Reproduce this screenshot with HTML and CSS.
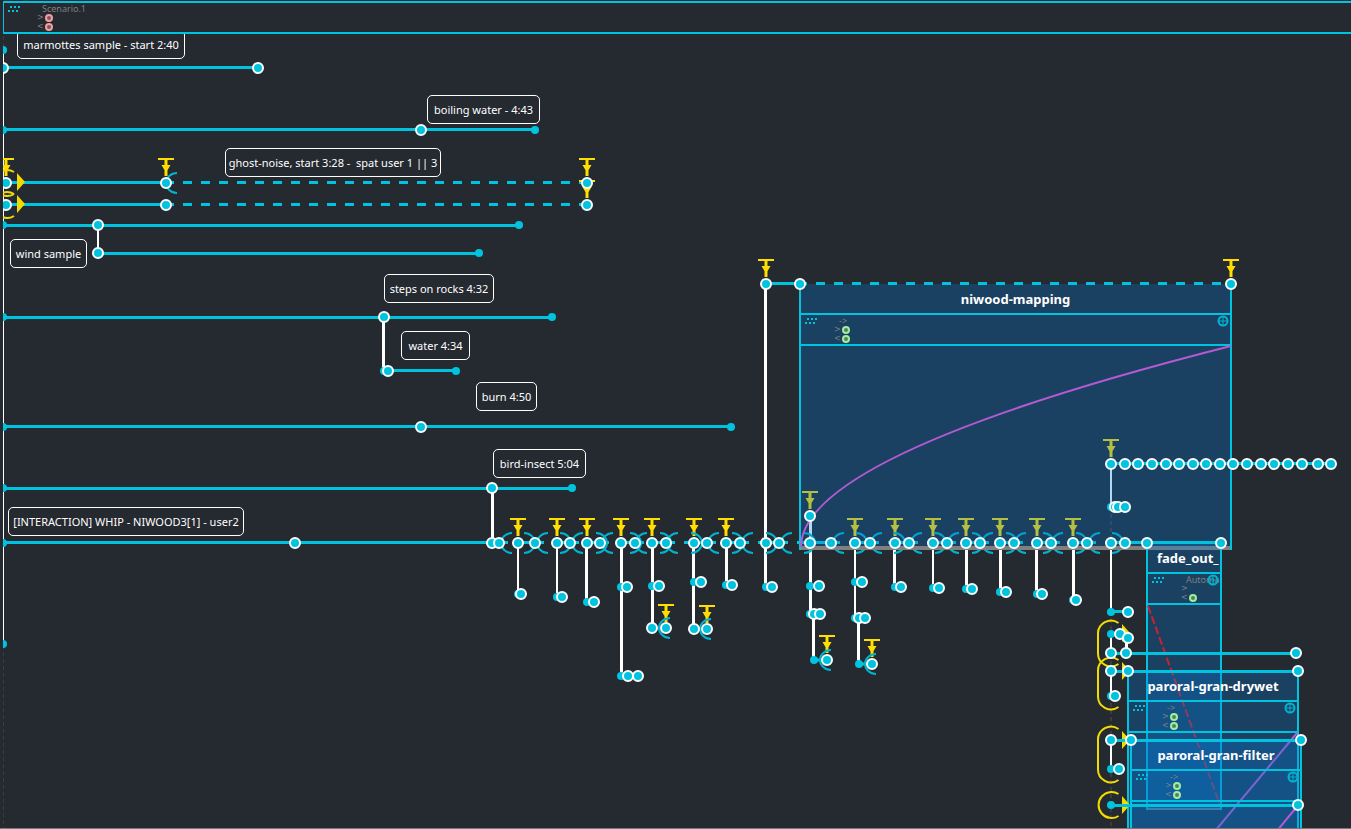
FILE: index.html
```html
<!DOCTYPE html>
<html lang="en">
<head>
<meta charset="utf-8">
<title>Scenario.1</title>
<link rel="stylesheet" href="styles.css">
</head>
<body>
<svg class="defs" aria-hidden="true">
  <defs>
    <circle id="n" r="5" class="node"/>
    <circle id="d" r="4" class="dot"/>
    <g id="t" class="trigger"><path d="M-8 -25H8V-23H-8ZM-1.500 -23H1.500V-7H-1.500ZM-4.500 -18H4.500L1 -12H-1Z"/></g>
    <path id="l" class="arc" d="M0 -10A11 10 0 0 0 0 10"/>
    <path id="r" class="arc" d="M0 -10A11 10 0 0 1 0 10"/>
    <path id="play" class="play" d="M0 -9L8 0L0 9Z"/>
    <g id="grip" class="grip"><path d="M2 0h2v2h-2zM6 0h2v2h-2zM10 0h2v2h-2zM0 4h2v2h-2zM4 4h2v2h-2zM8 4h2v2h-2z"/></g>
    <g id="plus" class="plus"><circle cx="6" cy="6" r="4.500"/><path d="M6 2V10M2 6H10"/></g>
  </defs>
</svg>

<header class="process-bar scenario">
  <svg class="grip-icon"><use href="#grip"/></svg>
  <div class="ports">
    <span class="name">Scenario.1</span>
    <span>&gt;</span><i class="ring in"></i>
    <span>&lt;</span><i class="ring in"></i>
  </div>
</header>

<main class="canvas">
  <svg class="layer" aria-hidden="true">
    <g transform="translate(-3 -34)">
      <path class="guide" d="M3 36V829M1111 507V829"/>
      <path class="edge" d="M3.500 50V644"/>
      <path class="line" d="M4 67.500H258M4 129.500H535M4 182.500H166M4 204.500H166M4 225.500H519M98 253.500H479M4 317.500H552M388 370.500H456M4 426.500H731M4 488.500H572M4 542.500H499"/>
      <path class="line dashed" d="M165 182.500H587M165 204.500H587"/>
      <path class="line" d="M518 542.500H535M557 542.500H570M587 542.500H600M621 542.500H635M652 542.500H666M694 542.500H707M726 542.500H740M766 542.500H779M810 542.500H831M855 542.500H870M895 542.500H909M933 542.500H947M966 542.500H980M1000 542.500H1014M1037 542.500H1051M1073 542.500H1087M814 660H827M859 664H872"/>
      <path class="line dashed" d="M499 542.500H518M535 542.500H557M570 542.500H587M600 542.500H621M635 542.500H652M666 542.500H694M707 542.500H726M740 542.500H766M779 542.500H810M831 542.500H855M870 542.500H895M909 542.500H933M947 542.500H966M980 542.500H1000M1014 542.500H1037M1051 542.500H1073M1087 542.500H1111"/>
      <path class="link" d="M383.500 317V371M492.500 488V543M586.500 543V602M621.500 543V676M652.500 543V628M693.500 543V629M726.500 543V585M765.500 284V587M810.500 516V614M813.500 614V660M858.500 618V664M894.500 543V587M966.500 543V589M1000.500 543V592M1036.500 543V594M1073.500 543V600"/>
      <path class="link thin" d="M98 225V253M518 543V594M557 543V597M855 543V618M933 543V588M1111 464V507M1111 543V612"/>

      <use href="#t" x="6" y="183"/><use href="#t" x="166" y="183"/><use href="#t" x="587" y="183"/><use href="#t" x="587" y="205"/>
      <use href="#t" x="518" y="543"/><use href="#t" x="557" y="543"/><use href="#t" x="587" y="543"/><use href="#t" x="621" y="543"/><use href="#t" x="652" y="543"/><use href="#t" x="694" y="543"/><use href="#t" x="726" y="543"/>
      <use href="#t" x="666" y="629"/><use href="#t" x="707" y="630"/><use href="#t" x="766" y="284"/><use href="#t" x="810" y="516"/>
      <use href="#t" x="855" y="543"/><use href="#t" x="895" y="543"/><use href="#t" x="933" y="543"/><use href="#t" x="966" y="543"/><use href="#t" x="1000" y="543"/><use href="#t" x="1037" y="543"/><use href="#t" x="1073" y="543"/>
      <use href="#t" x="827" y="660"/><use href="#t" x="872" y="664"/><use href="#t" x="1111" y="464"/>

      <use href="#l" x="177" y="183"/><use href="#l" x="512" y="543"/><use href="#l" x="548" y="543"/><use href="#l" x="583" y="543"/><use href="#l" x="613" y="543"/><use href="#l" x="647" y="543"/><use href="#l" x="678" y="543"/><use href="#l" x="719" y="543"/><use href="#l" x="753" y="543"/><use href="#l" x="792" y="543"/><use href="#l" x="844" y="543"/><use href="#l" x="882" y="543"/><use href="#l" x="922" y="543"/><use href="#l" x="959" y="543"/><use href="#l" x="993" y="543"/><use href="#l" x="1026" y="543"/><use href="#l" x="1063" y="543"/><use href="#l" x="1100" y="543"/>
      <use href="#l" x="670" y="628"/><use href="#l" x="711" y="629"/><use href="#l" x="831" y="660"/><use href="#l" x="876" y="664"/>
      <use href="#r" x="524" y="543"/><use href="#r" x="560" y="543"/><use href="#r" x="596" y="543"/><use href="#r" x="630" y="543"/><use href="#r" x="660" y="543"/><use href="#r" x="691" y="543"/><use href="#r" x="732" y="543"/><use href="#r" x="766" y="543"/><use href="#r" x="804" y="543"/><use href="#r" x="856" y="543"/><use href="#r" x="894" y="543"/><use href="#r" x="935" y="543"/><use href="#r" x="972" y="543"/><use href="#r" x="1006" y="543"/><use href="#r" x="1043" y="543"/><use href="#r" x="1076" y="543"/><use href="#r" x="1112" y="543"/>

      <path class="loop" d="M14 172A13 13 0 1 0 14 194M14 194A13 13 0 1 0 14 216"/>
      <use href="#play" x="17" y="182"/><use href="#play" x="17" y="204"/>
    </g>
  </svg>

  <section class="box niwood">
    <h2 class="title">niwood-mapping</h2>
    <div class="process-bar">
      <svg class="grip-icon"><use href="#grip"/></svg>
      <div class="ports">
        <span class="name">-&gt;</span>
        <span>&gt;</span><i class="ring"></i>
        <span>&lt;</span><i class="ring"></i>
      </div>
      <button class="add" aria-label="Add process"><svg><use href="#plus"/></svg></button>
    </div>
    <div class="body">
      <svg class="plot"><path class="curve" d="M0 201Q0 109 430 0"/></svg>
    </div>
    <div class="foot"></div>
  </section>

  <section class="box fade">
    <h2 class="title">fade_out_</h2>
    <div class="process-bar">
      <svg class="grip-icon"><use href="#grip"/></svg>
      <div class="ports">
        <span class="name">Automa</span>
        <span>&gt;</span><i></i>
        <span>&lt;</span><i class="ring"></i>
      </div>
      <button class="add" aria-label="Add process"><svg><use href="#plus"/></svg></button>
    </div>
    <div class="body">
      <svg class="plot"><path class="ramp" d="M0 1L72 200"/></svg>
    </div>
    <div class="foot"></div>
  </section>

  <section class="box drywet">
    <h2 class="title">paroral-gran-drywet</h2>
    <div class="process-bar">
      <svg class="grip-icon"><use href="#grip"/></svg>
      <div class="ports">
        <span class="name">-&gt;</span>
        <span>&gt;</span><i class="ring"></i>
        <span>&lt;</span><i class="ring"></i>
      </div>
      <button class="add" aria-label="Add process"><svg><use href="#plus"/></svg></button>
    </div>
    <div class="body">
      <svg class="plot"><path class="curve" d="M168 0L86 98"/></svg>
    </div>
  </section>

  <section class="box filter">
    <h2 class="title">paroral-gran-filter</h2>
    <div class="process-bar">
      <svg class="grip-icon"><use href="#grip"/></svg>
      <div class="ports">
        <span class="name">-&gt;</span>
        <span>&gt;</span><i class="ring"></i>
        <span>&lt;</span><i class="ring"></i>
      </div>
      <button class="add" aria-label="Add process"><svg><use href="#plus"/></svg></button>
    </div>
    <div class="body">
      <svg class="plot"><path class="curve" d="M168 1L144 30"/></svg>
    </div>
  </section>

  <svg class="layer" aria-hidden="true">
    <g transform="translate(-3 -34)">
      <path class="line" d="M766 283.500H800M1111 463.500H1331M1111 542.500H1221M1111 611.500H1128M1111 634H1120M1111 653.500H1296M1111 671.500H1298M1111 740.500H1301M1111 805.500H1298"/>
      <path class="line dashed" d="M798 283.500H1231"/>
      <use href="#t" x="1231" y="284"/>
      <path class="link thin" d="M1111 634V653M1111 671V696M1111 740V769"/>
      <path class="link" d="M1126.500 638V653"/>
      <use href="#play" x="1122" y="633"/><use href="#play" x="1122" y="671"/><use href="#play" x="1122" y="740"/><use href="#play" x="1122" y="805"/>
      <path class="line" d="M1111 671.500H1135M1111 740.500H1135M1111 805.500H1135"/>
      <path class="loop" d="M1118.500 623A13 13 0 0 0 1098 634V653A13 13 0 0 0 1118.500 664M1118.500 660A13 13 0 0 0 1098 671V696A13 13 0 0 0 1118.500 707M1118.500 729A13 13 0 0 0 1098 740V769A13 13 0 0 0 1118.500 780M1118.500 794A13 13 0 1 0 1118.500 816"/>

      <use href="#d" x="3" y="50"/><use href="#n" x="3" y="68"/><use href="#n" x="258" y="68"/>
      <use href="#d" x="3" y="130"/><use href="#n" x="421" y="130"/><use href="#d" x="535" y="130"/>
      <use href="#n" x="6" y="183"/><use href="#n" x="166" y="183"/><use href="#n" x="587" y="183"/>
      <use href="#n" x="6" y="205"/><use href="#n" x="166" y="205"/><use href="#n" x="587" y="205"/>
      <use href="#d" x="3" y="225"/><use href="#n" x="98" y="225"/><use href="#d" x="519" y="225"/>
      <use href="#n" x="98" y="253"/><use href="#d" x="479" y="253"/>
      <use href="#d" x="3" y="317"/><use href="#n" x="384" y="317"/><use href="#d" x="552" y="317"/>
      <use href="#d" x="384" y="371"/><use href="#n" x="388" y="371"/><use href="#d" x="456" y="371"/>
      <use href="#d" x="3" y="427"/><use href="#n" x="421" y="427"/><use href="#d" x="731" y="427"/>
      <use href="#d" x="3" y="488"/><use href="#n" x="492" y="488"/><use href="#d" x="572" y="488"/>
      <use href="#d" x="3" y="543"/><use href="#n" x="295" y="543"/><use href="#d" x="3" y="644"/>

      <use href="#n" x="492" y="543"/><use href="#n" x="499" y="543"/><use href="#n" x="518" y="543"/><use href="#n" x="535" y="543"/><use href="#n" x="557" y="543"/><use href="#n" x="570" y="543"/><use href="#n" x="587" y="543"/><use href="#n" x="600" y="543"/><use href="#n" x="621" y="543"/><use href="#n" x="635" y="543"/><use href="#n" x="652" y="543"/><use href="#n" x="666" y="543"/><use href="#n" x="694" y="543"/><use href="#n" x="707" y="543"/><use href="#n" x="726" y="543"/><use href="#n" x="740" y="543"/><use href="#n" x="766" y="543"/><use href="#n" x="779" y="543"/><use href="#n" x="810" y="543"/><use href="#n" x="831" y="543"/><use href="#n" x="855" y="543"/><use href="#n" x="870" y="543"/><use href="#n" x="895" y="543"/><use href="#n" x="909" y="543"/><use href="#n" x="933" y="543"/><use href="#n" x="947" y="543"/><use href="#n" x="966" y="543"/><use href="#n" x="980" y="543"/><use href="#n" x="1000" y="543"/><use href="#n" x="1014" y="543"/><use href="#n" x="1037" y="543"/><use href="#n" x="1051" y="543"/><use href="#n" x="1073" y="543"/><use href="#n" x="1087" y="543"/><use href="#n" x="1111" y="543"/><use href="#n" x="1125" y="543"/><use href="#n" x="1147" y="543"/><use href="#n" x="1221" y="543"/>

      <use href="#d" x="518" y="594"/><use href="#n" x="521" y="594"/>
      <use href="#d" x="557" y="597"/><use href="#n" x="562" y="597"/>
      <use href="#d" x="587" y="602"/><use href="#n" x="594" y="602"/>
      <use href="#d" x="621" y="587"/><use href="#n" x="627" y="587"/><use href="#d" x="621" y="676"/><use href="#n" x="628" y="676"/><use href="#n" x="638" y="676"/>
      <use href="#d" x="652" y="586"/><use href="#n" x="659" y="586"/><use href="#n" x="652" y="628"/><use href="#n" x="666" y="628"/>
      <use href="#d" x="694" y="582"/><use href="#n" x="701" y="582"/><use href="#n" x="694" y="629"/><use href="#n" x="707" y="629"/>
      <use href="#d" x="726" y="585"/><use href="#n" x="732" y="585"/>
      <use href="#n" x="766" y="284"/><use href="#n" x="800" y="284"/><use href="#n" x="1231" y="284"/><use href="#d" x="766" y="587"/><use href="#n" x="772" y="587"/>
      <use href="#n" x="810" y="516"/><use href="#d" x="810" y="586"/><use href="#n" x="819" y="586"/><use href="#d" x="810" y="614"/><use href="#n" x="814" y="614"/><use href="#n" x="820" y="614"/><use href="#d" x="814" y="660"/><use href="#n" x="827" y="660"/>
      <use href="#d" x="855" y="582"/><use href="#n" x="862" y="582"/><use href="#d" x="855" y="618"/><use href="#n" x="859" y="618"/><use href="#n" x="865" y="618"/><use href="#d" x="859" y="664"/><use href="#n" x="872" y="664"/>
      <use href="#d" x="895" y="587"/><use href="#n" x="901" y="587"/><use href="#d" x="933" y="588"/><use href="#n" x="939" y="588"/><use href="#d" x="966" y="589"/><use href="#n" x="972" y="589"/>
      <use href="#d" x="1000" y="592"/><use href="#n" x="1006" y="592"/><use href="#d" x="1037" y="594"/><use href="#n" x="1042" y="594"/><use href="#d" x="1073" y="600"/><use href="#n" x="1076" y="600"/>

      <use href="#n" x="1111" y="464"/><use href="#n" x="1125" y="464"/><use href="#n" x="1138" y="464"/><use href="#n" x="1152" y="464"/><use href="#n" x="1166" y="464"/><use href="#n" x="1179" y="464"/><use href="#n" x="1193" y="464"/><use href="#n" x="1206" y="464"/><use href="#n" x="1220" y="464"/><use href="#n" x="1233" y="464"/><use href="#n" x="1247" y="464"/><use href="#n" x="1261" y="464"/><use href="#n" x="1274" y="464"/><use href="#n" x="1288" y="464"/><use href="#n" x="1302" y="464"/><use href="#n" x="1318" y="464"/><use href="#n" x="1331" y="464"/>
      <use href="#d" x="1111" y="507"/><use href="#n" x="1115" y="507"/><use href="#n" x="1118" y="507"/><use href="#n" x="1125" y="507"/>
      <use href="#d" x="1111" y="612"/><use href="#n" x="1128" y="612"/>
      <use href="#d" x="1111" y="634"/><use href="#n" x="1120" y="634"/><use href="#n" x="1128" y="638"/><use href="#n" x="1111" y="653"/><use href="#n" x="1126" y="653"/><use href="#n" x="1296" y="653"/>
      <use href="#n" x="1111" y="671"/><use href="#n" x="1128" y="671"/><use href="#n" x="1298" y="671"/><use href="#d" x="1111" y="696"/><use href="#n" x="1115" y="696"/>
      <use href="#n" x="1111" y="740"/><use href="#n" x="1131" y="740"/><use href="#n" x="1301" y="740"/><use href="#d" x="1111" y="769"/><use href="#n" x="1119" y="769"/>
      <use href="#d" x="1111" y="805"/><use href="#n" x="1298" y="805"/>
    </g>
  </svg>

  <p class="note marmottes">marmottes sample - start 2:40</p>
  <p class="note boiling">boiling water - 4:43</p>
  <p class="note ghost">ghost-noise, start 3:28 -&nbsp; spat user 1 || 3</p>
  <p class="note wind">wind sample</p>
  <p class="note steps">steps on rocks 4:32</p>
  <p class="note water">water 4:34</p>
  <p class="note burn">burn 4:50</p>
  <p class="note bird">bird-insect 5:04</p>
  <p class="note whip">[INTERACTION] WHIP - NIWOOD3[1] - user2</p>
</main>
</body>
</html>
```
FILE: styles.css
```css
* { box-sizing: border-box; }

html, body { height: 100%; }

body {
  margin: 0;
  display: flex;
  flex-direction: column;
  overflow: hidden;
  background: #252930;
  border-bottom: 1px solid #7d767c;
  color: #fff;
  font-family: "Noto Sans", "Open Sans", sans-serif;
  font-size: 11px;
}

.defs { position: absolute; width: 0; height: 0; }

/* process bars: the scenario header and the header of each box */
.process-bar {
  display: flex;
  align-items: flex-start;
  height: 33px;
  border-top: 2px solid #00c4df;
  border-bottom: 2px solid #00c4df;
}

.scenario {
  flex: none;
  margin: 1px 0 0 3px;
  border-left: 1px solid #00c4df;
}

.grip-icon {
  flex: none;
  width: 14px;
  height: 8px;
  margin: 3px 14px 0 4px;
}

.ports {
  flex: 1;
  min-width: 0;
  display: grid;
  grid-template-columns: 8px 10px;
  grid-auto-rows: 9px;
  align-items: center;
  padding-top: 1px;
  color: #808080;
  font-family: "DejaVu Sans", sans-serif;
  font-size: 8px;
  line-height: 9px;
}

.ports span { margin-left: 1px; }

.ports .name {
  grid-column: 1 / 3;
  margin-left: 6px;
  font-family: "Noto Sans", sans-serif;
  font-size: 9px;
  white-space: nowrap;
}

.ring {
  justify-self: center;
  width: 8px;
  height: 8px;
  border: 2px solid #a0eea0;
  border-radius: 50%;
  background: #55805c;
}

.ring.in { border-color: #f0a0a0; background: #805558; }

.add {
  flex: none;
  width: 12px;
  height: 12px;
  margin: 0 1px 0 -14px;
  padding: 0;
  border: 0;
  background: none;
}

.add svg { display: block; width: 12px; height: 12px; }

/* canvas */
.canvas {
  position: relative;
  flex: 1;
  min-height: 0;
  margin-left: 3px;
  overflow: hidden;
}

.layer {
  position: absolute;
  inset: 0;
  width: 100%;
  height: 100%;
  pointer-events: none;
}

.node { fill: #00c4df; stroke: #fff; stroke-width: 2; }
.dot { fill: #00c4df; }
.trigger { fill: #ffde00; }
.arc { fill: none; stroke: #00b4d0; stroke-width: 2; }
.play { fill: #f2dc00; }
.loop { fill: none; stroke: #f2dc00; stroke-width: 2; }
.line { fill: none; stroke: #00c4df; stroke-width: 3; }
.dashed { stroke-dasharray: 9 9; }
.link { fill: none; stroke: #fff; stroke-width: 3; }
.thin { stroke-width: 2; }
.edge { stroke: #fff; stroke-width: 1; }
.guide { fill: none; stroke: #3c3c3f; stroke-width: 2; stroke-dasharray: 4 3; }
.grip { fill: #00c4df; }
.plus { fill: none; stroke: #00b4d0; stroke-width: 2; }
.plus path { stroke-width: 1; }
.curve { fill: none; stroke: #b45ad2; stroke-width: 2; }
.ramp { fill: none; stroke: #d0202c; stroke-width: 2; stroke-dasharray: 8 3; }

/* boxes placed on the canvas */
.box {
  position: absolute;
  display: flex;
  flex-direction: column;
  border: 0 solid #00c4df;
  border-width: 0 2px;
  background: rgba(7, 124, 215, 0.3);
  background-clip: padding-box;
}

.niwood { left: 796px; top: 250px; width: 433px; height: 266px; }
.fade { left: 1143px; top: 509px; width: 76px; height: 267px; }
.drywet { left: 1124px; top: 637px; width: 172px; height: 200px; }
.filter { left: 1127px; top: 706px; width: 172px; height: 130px; }

.title {
  flex: none;
  height: 29px;
  margin: 0;
  overflow: hidden;
  font-size: 13px;
  font-weight: 700;
  line-height: 30px;
  text-align: center;
  white-space: nowrap;
}

.fade .title { padding-left: 9px; text-align: left; }
.box .process-bar { flex: none; }

.body { flex: 1; min-height: 0; }
.plot { display: block; width: 100%; height: 100%; overflow: visible; }
.foot { height: 4px; background: #808080; }
.fade .foot { height: 2px; }

/* comment labels */
.note {
  position: absolute;
  height: 29px;
  margin: 0;
  border: 1px solid #fff;
  border-radius: 5px;
  line-height: 28px;
  text-align: center;
  white-space: nowrap;
}

.marmottes { left: 14px; top: -4px; width: 168px; }
.boiling { left: 424px; top: 61px; width: 113px; }
.ghost { left: 222px; top: 114px; width: 216px; }
.wind { left: 7px; top: 205px; width: 77px; }
.steps { left: 381px; top: 240px; width: 110px; }
.water { left: 398px; top: 297px; width: 69px; }
.burn { left: 473px; top: 348px; width: 61px; }
.bird { left: 490px; top: 415px; width: 93px; }
.whip { left: 5px; top: 473px; width: 236px; }
```
